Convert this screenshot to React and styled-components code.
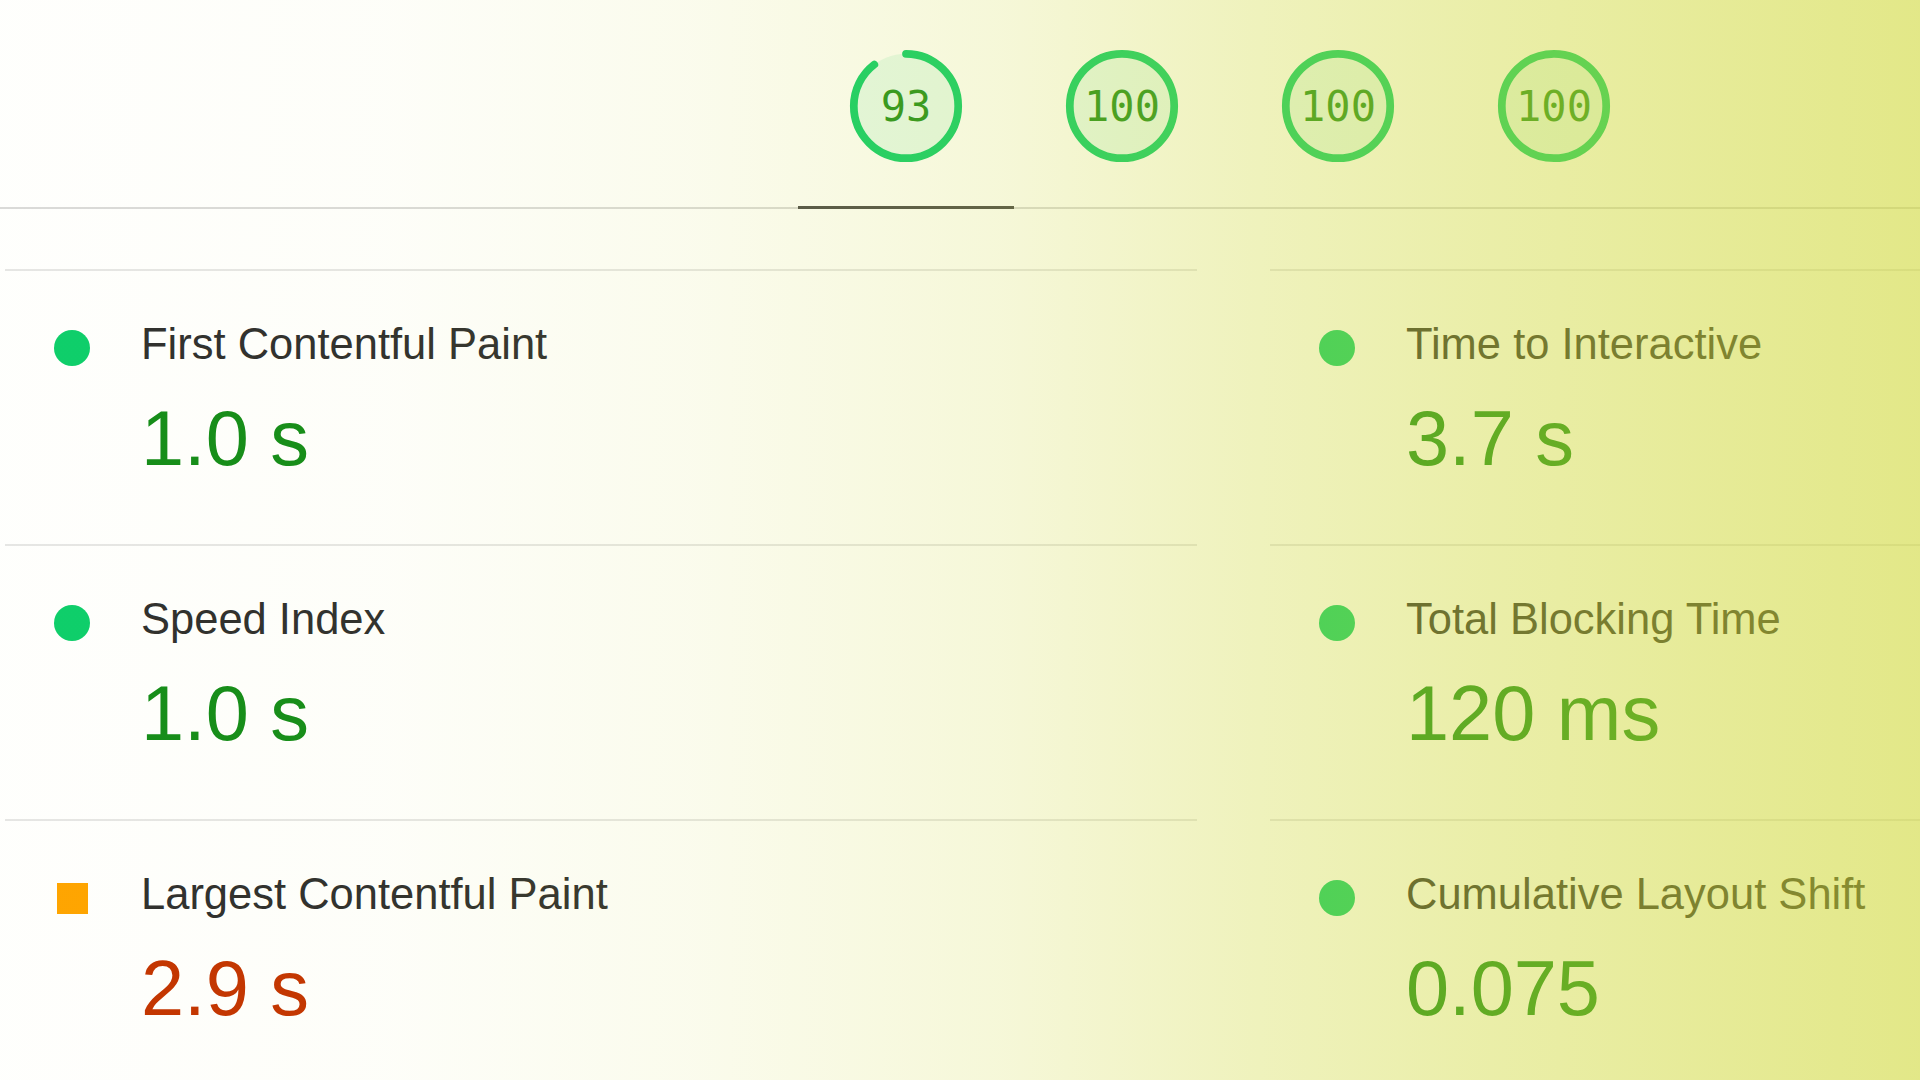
import React from 'react';
import styled, { createGlobalStyle } from 'styled-components';

const GlobalStyle = createGlobalStyle`
  html, body {
    margin: 0;
    padding: 0;
    background: #ffffff;
    overflow: hidden;
  }

  body {
    font-family: 'Liberation Sans', Arial, sans-serif;
    color: #212121;
  }
`;

const GAUGE_R = 54;
const GAUGE_C = 2 * Math.PI * GAUGE_R;

const gauges = [
  { score: 93, active: true },
  { score: 100 },
  { score: 100 },
  { score: 100 },
];

const metrics = [
  { title: 'First Contentful Paint', value: '1.0 s', rating: 'pass' },
  { title: 'Time to Interactive', value: '3.7 s', rating: 'pass' },
  { title: 'Speed Index', value: '1.0 s', rating: 'pass' },
  { title: 'Total Blocking Time', value: '120 ms', rating: 'pass' },
  { title: 'Largest Contentful Paint', value: '2.9 s', rating: 'average' },
  { title: 'Cumulative Layout Shift', value: '0.075', rating: 'pass' },
];

const ratingColors = {
  pass: { icon: '#0cce6b', value: '#138c19' },
  average: { icon: '#ffa400', value: '#c33300' },
};

const Gauge = ({ score }) => {
  // leave a little room for the round caps so the gap reads like the score
  const arc = score >= 100 ? GAUGE_C : (score / 100) * GAUGE_C - 12;

  return (
    <GaugeWrap>
      <svg width="116" height="116" viewBox="0 0 120 120">
        <circle cx="60" cy="60" r={GAUGE_R} fill="rgba(12, 206, 107, 0.1)" />
        <circle
          cx="60"
          cy="60"
          r={GAUGE_R}
          fill="none"
          stroke="#0cce6b"
          strokeWidth="8"
          strokeLinecap="round"
          strokeDasharray={`${arc} ${GAUGE_C}`}
          transform="rotate(-90 60 60)"
        />
      </svg>
      <GaugeScore>{score}</GaugeScore>
    </GaugeWrap>
  );
};

const App = () => {
  return (
    <>
      <GlobalStyle />
      <Page>
        <Header>
          <GaugeRow>
            {gauges.map((g, i) => (
              <GaugeTab key={i} $active={g.active}>
                <Gauge score={g.score} />
              </GaugeTab>
            ))}
          </GaugeRow>
        </Header>

        <MetricGrid>
          {metrics.map((m) => (
            <Metric key={m.title}>
              <IconSlot>
                <RatingIcon $rating={m.rating} />
              </IconSlot>
              <MetricText>
                <MetricTitle>{m.title}</MetricTitle>
                <MetricValue $rating={m.rating}>{m.value}</MetricValue>
              </MetricText>
            </Metric>
          ))}
        </MetricGrid>

        <Tint />
      </Page>
    </>
  );
};

export default App;

const Page = styled.div`
  position: relative;
  width: 1920px;
  height: 1080px;
  overflow: hidden;
  background: #ffffff;
`;

const Header = styled.header`
  height: 207px;
  border-bottom: 2px solid #dadada;
  box-sizing: content-box;
`;

const GaugeRow = styled.div`
  display: flex;
  height: 100%;
  padding-left: 798px;
`;

const GaugeTab = styled.div`
  display: flex;
  align-items: center;
  justify-content: center;
  width: 216px;
  height: calc(100% + 2px);
  padding-top: 6px;
  box-sizing: border-box;
  border-bottom: 3px solid ${(p) => (p.$active ? '#4a4a4a' : 'transparent')};
  margin-bottom: -2px;
`;

const GaugeWrap = styled.div`
  display: grid;
  place-items: center;

  & > * {
    grid-area: 1 / 1;
  }
`;

const GaugeScore = styled.span`
  font-family: 'DejaVu Sans Mono', 'Liberation Mono', monospace;
  font-size: 42px;
  line-height: 1;
  color: #1f8f1c;
  padding-top: 2px;
`;

const MetricGrid = styled.div`
  display: grid;
  grid-template-columns: 1192px 1192px;
  column-gap: 73px;
  margin-top: 60px;
  padding-left: 5px;
`;

const Metric = styled.div`
  display: flex;
  align-items: flex-start;
  height: 275px;
  box-sizing: border-box;
  border-top: 2px solid #e6e6e6;
  padding: 51px 0 0 49px;
`;

const IconSlot = styled.div`
  display: flex;
  align-items: center;
  justify-content: center;
  width: 36px;
  height: 36px;
  margin-top: 8px;
  flex-shrink: 0;
`;

const RatingIcon = styled.span`
  display: block;
  width: ${(p) => (p.$rating === 'average' ? '31px' : '36px')};
  height: ${(p) => (p.$rating === 'average' ? '31px' : '36px')};
  border-radius: ${(p) => (p.$rating === 'average' ? '0' : '50%')};
  background: ${(p) => ratingColors[p.$rating].icon};
`;

const MetricText = styled.div`
  display: flex;
  flex-direction: column;
  gap: 33px;
  margin-left: 51px;
`;

const MetricTitle = styled.div`
  font-size: 43.5px;
  line-height: 1;
  padding-top: 1px;
  color: #2e2e2e;
  white-space: nowrap;
`;

const MetricValue = styled.div`
  font-size: 77.5px;
  line-height: 1;
  color: ${(p) => ratingColors[p.$rating].value};
  white-space: nowrap;
`;

// warm yellow wash that deepens toward the right edge
const Tint = styled.div`
  position: absolute;
  inset: 0;
  pointer-events: none;
  background: linear-gradient(
    to right,
    rgba(206, 215, 50, 0.01) 0%,
    rgba(206, 215, 50, 0.03) 20%,
    rgba(206, 215, 50, 0.09) 36%,
    rgba(206, 215, 50, 0.19) 52%,
    rgba(206, 215, 50, 0.32) 65%,
    rgba(206, 215, 50, 0.42) 77%,
    rgba(206, 215, 50, 0.58) 100%
  );
`;
